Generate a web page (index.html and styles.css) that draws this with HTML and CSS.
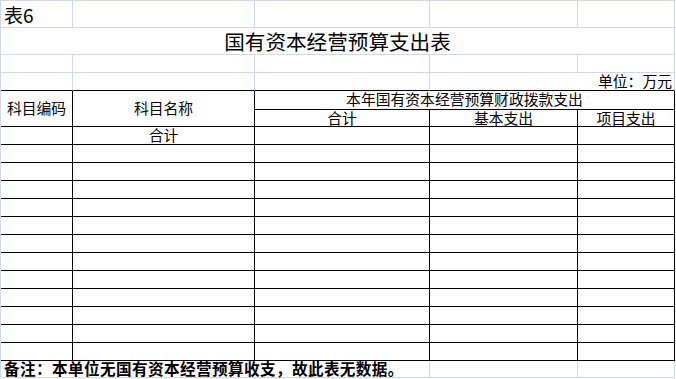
FILE: index.html
```html
<!DOCTYPE html>
<html lang="zh-CN">
<head>
<meta charset="utf-8">
<title>表6 国有资本经营预算支出表</title>
<link rel="stylesheet" href="styles.css">
</head>
<body>
<div class="sheet">
  <!-- row 0 -->
  <div class="cell g left tag">表6</div>
  <div class="cell g"></div>
  <div class="cell g"></div>
  <div class="cell g"></div>
  <div class="cell g"></div>
  <!-- row 1 title -->
  <div class="cell g title span5">国有资本经营预算支出表</div>
  <!-- row 2 -->
  <div class="cell g"></div>
  <div class="cell g"></div>
  <div class="cell g"></div>
  <div class="cell g"></div>
  <div class="cell g"></div>
  <!-- row 3 unit -->
  <div class="cell gk"></div>
  <div class="cell gk"></div>
  <div class="cell gk"></div>
  <div class="cell gk right span2">单位：万元</div>
  <!-- header -->
  <div class="cell k rspan2">科目编码</div>
  <div class="cell k rspan2">科目名称</div>
  <div class="cell k span3 top">本年国有资本经营预算财政拨款支出</div>
  <div class="cell k">合计</div>
  <div class="cell k">基本支出</div>
  <div class="cell k">项目支出</div>
  <!-- total -->
  <div class="cell k"></div>
  <div class="cell k">合计</div>
  <div class="cell k"></div>
  <div class="cell k"></div>
  <div class="cell k"></div>
  <!-- body rows -->
  <div class="cell k"></div><div class="cell k"></div><div class="cell k"></div><div class="cell k"></div><div class="cell k"></div>
  <div class="cell k"></div><div class="cell k"></div><div class="cell k"></div><div class="cell k"></div><div class="cell k"></div>
  <div class="cell k"></div><div class="cell k"></div><div class="cell k"></div><div class="cell k"></div><div class="cell k"></div>
  <div class="cell k"></div><div class="cell k"></div><div class="cell k"></div><div class="cell k"></div><div class="cell k"></div>
  <div class="cell k"></div><div class="cell k"></div><div class="cell k"></div><div class="cell k"></div><div class="cell k"></div>
  <div class="cell k"></div><div class="cell k"></div><div class="cell k"></div><div class="cell k"></div><div class="cell k"></div>
  <div class="cell k"></div><div class="cell k"></div><div class="cell k"></div><div class="cell k"></div><div class="cell k"></div>
  <div class="cell k"></div><div class="cell k"></div><div class="cell k"></div><div class="cell k"></div><div class="cell k"></div>
  <div class="cell k"></div><div class="cell k"></div><div class="cell k"></div><div class="cell k"></div><div class="cell k"></div>
  <div class="cell k"></div><div class="cell k"></div><div class="cell k"></div><div class="cell k"></div><div class="cell k"></div>
  <div class="cell k"></div><div class="cell k"></div><div class="cell k"></div><div class="cell k"></div><div class="cell k"></div>
  <div class="cell k"></div><div class="cell k"></div><div class="cell k"></div><div class="cell k"></div><div class="cell k"></div>
  <!-- note -->
  <div class="cell g left note span3">备注：本单位无国有资本经营预算收支，故此表无数据。</div>
  <div class="cell g"></div>
  <div class="cell g"></div>
</div>
</body>
</html>
```

FILE: styles.css
```css
html, body {
  margin: 0;
  padding: 0;
  background: #ffffff;
}

body {
  width: 676px;
  height: 379px;
  overflow: hidden;
  font-family: "Noto Sans CJK SC", "Noto Sans", sans-serif;
  color: #000000;
}

.sheet {
  display: grid;
  grid-template-columns: 72px 182px 175px 148px 97px;
  grid-template-rows: 27px 27px 18px 18px 19px 17px repeat(13, 18px) 17px;
  width: max-content;
  border-left: 1px solid #d0d7e5;
  border-top: 1px solid #d0d7e5;
}

.cell {
  box-sizing: border-box;
  border-right: 1px solid #000;
  border-bottom: 1px solid #000;
  display: flex;
  align-items: center;
  justify-content: center;
  white-space: nowrap;
  font-size: 14.8px;
  line-height: 1;
  overflow: visible;
  min-width: 0;
  text-spacing-trim: space-all;
}

.g {
  border-right-color: #d0d7e5;
  border-bottom-color: #d0d7e5;
}

.gk {
  border-right-color: #d0d7e5;
  border-bottom-color: #000;
}

.k {
  border-color: #000;
}

.top {
  padding-bottom: 2px;
}

.left {
  justify-content: flex-start;
  padding-left: 3px;
}

.right {
  justify-content: flex-end;
  padding-right: 2px;
}

.span5 { grid-column: span 5; }
.span3 { grid-column: span 3; }
.span2 { grid-column: span 2; }
.rspan2 { grid-row: span 2; }

.tag {
  font-size: 19px;
  padding-left: 3px;
}

.title {
  font-size: 20.6px;
}

.note {
  font-size: 15.6px;
  font-weight: 700;
  letter-spacing: 0.4px;
  padding-left: 3px;
}
```
